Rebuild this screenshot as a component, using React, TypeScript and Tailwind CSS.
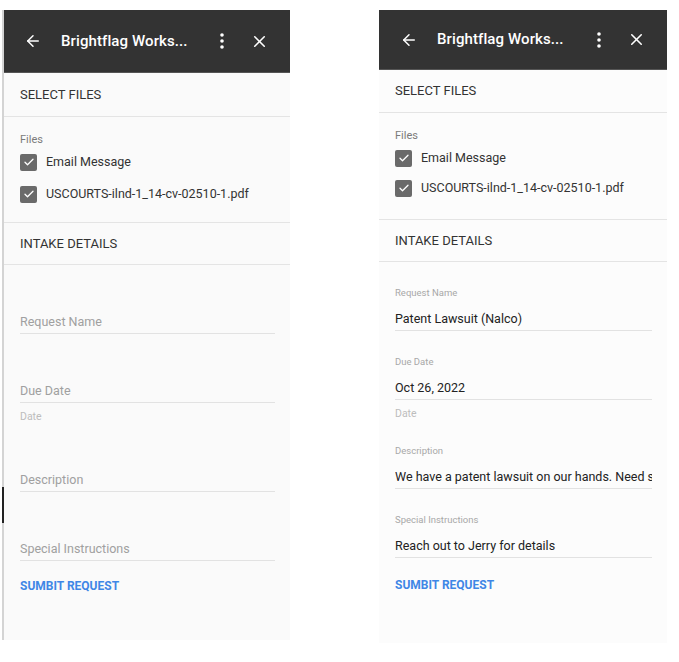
import React from "react";
import { ArrowLeft, X } from "lucide-react";

interface Field {
  label: string;
  helper?: string;
}

const fields: Field[] = [
  { label: "Request Name" },
  { label: "Due Date", helper: "Date" },
  { label: "Description" },
  { label: "Special Instructions" },
];

const filledValues = [
  "Patent Lawsuit (Nalco)",
  "Oct 26, 2022",
  "We have a patent lawsuit on our hands. Need someone to review it",
  "Reach out to Jerry for details",
];

const Kebab = () => (
  <svg width="6" height="16" viewBox="0 0 6 16" fill="#fff">
    <circle cx="3" cy="2" r="1.8" />
    <circle cx="3" cy="8" r="1.8" />
    <circle cx="3" cy="14" r="1.8" />
  </svg>
);

const Checkbox = () => (
  <span className="w-[17px] h-[17px] rounded-[2px] bg-[#6a6a6a] flex items-center justify-center shrink-0">
    <svg width="12" height="12" viewBox="0 0 24 24" fill="none" stroke="#fff" strokeWidth="2.6" strokeLinecap="round" strokeLinejoin="round">
      <path d="M4 12.5l5 5L20 6.5" />
    </svg>
  </span>
);

const Panel = ({ filled }: { filled: boolean }) => {
  return (
    <div
      className={
        filled
          ? "w-[288px] bg-[#fcfcfc] h-[633px] flex flex-col"
          : "relative w-[288px] border-l-2 border-[#d4d4d4] bg-[#fafafa] h-[630px] flex flex-col"
      }
    >
      {!filled && <span className="absolute left-[-2px] top-[477px] w-[2px] h-[36px] bg-[#222]" />}
      {/* toolbar */}
      <div
        className={`${filled ? "h-[60px] pl-[21px]" : "h-[63px] pl-[20px]"} bg-[#333333] border-b border-[#555] flex items-center pr-[21px] text-white`}
      >
        <ArrowLeft size={18} strokeWidth={2} />
        <span className="ml-[19px] text-[15px] font-medium tracking-[0.1px]">Brightflag Works...</span>
        <span className="ml-auto mr-[25px] flex items-center">
          <Kebab />
        </span>
        <X size={19} strokeWidth={2} />
      </div>

      <div
        className={`${filled ? "h-[43px]" : "h-[44px]"} px-4 flex items-center text-[13px] text-[#333] border-b border-[#e4e4e4]`}
      >
        SELECT FILES
      </div>

      <div className={`px-4 ${filled ? "pt-[16px] pb-[19px]" : "pt-[16px] pb-[16px]"} border-b border-[#e4e4e4]`}>
        <div className="text-[11px] leading-[14px] text-[#7a7a7a]">Files</div>
        <div className={`flex flex-col ${filled ? "gap-[6px] mt-[3px]" : "gap-[8px] mt-[3px]"}`}>
          <label className="flex items-center gap-[9px] h-[24px] text-[12.5px] text-[#333]">
            <Checkbox />
            Email Message
          </label>
          <label className="flex items-center gap-[9px] h-[24px] text-[12.5px] text-[#333]">
            <Checkbox />
            USCOURTS-ilnd-1_14-cv-02510-1.pdf
          </label>
        </div>
      </div>

      <div className="h-[42px] px-4 flex items-center text-[13px] text-[#333] border-b border-[#e4e4e4]">
        INTAKE DETAILS
      </div>

      <div className="px-4 pr-[15px]">
        {fields.map((f, i) => (
          <div key={f.label} className="pt-[25px]">
            <div className="h-[12px] text-[9.5px] leading-[12px] text-[#a8a8a8]">{filled ? f.label : ""}</div>
            <div className="pt-[11px] pb-[2px] border-b border-[#e2e2e2] text-[12.5px] leading-[18px] whitespace-nowrap overflow-hidden">
              {filled ? (
                <span className="text-[#222]">{filledValues[i]}</span>
              ) : (
                <span className="text-[#a0a0a0]">{f.label}</span>
              )}
            </div>
            {f.helper && (
              <div className="mt-[8px] h-[12px] text-[10.5px] leading-[12px] text-[#bdbdbd]">{f.helper}</div>
            )}
          </div>
        ))}
        <div className={`${filled ? "mt-[20px]" : "mt-[18px]"} text-[12px] leading-[14px] font-bold text-[#3f87e6]`}>
          SUMBIT REQUEST
        </div>
      </div>
    </div>
  );
};

export default function App() {
  return (
    <div className="w-[679px] h-[662px] bg-white flex items-start pt-[10px] pl-[2px] gap-[89px] font-['Roboto','Liberation_Sans',sans-serif]">
      <Panel filled={false} />
      <Panel filled={true} />
    </div>
  );
}
